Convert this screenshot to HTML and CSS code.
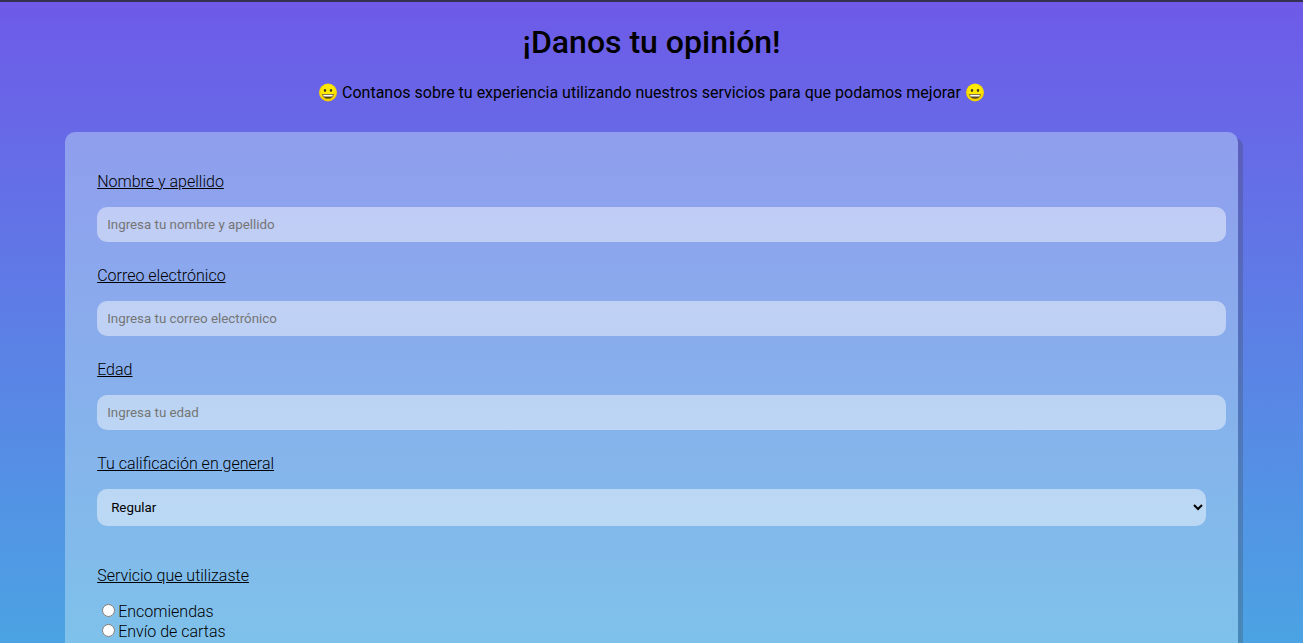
FILE: index.html
```html
<!DOCTYPE html>
<html lang="es">
<head>
<meta charset="utf-8">
<title>Formulario de opinión</title>
<link rel="stylesheet" href="styles.css">
</head>
<body>
<svg width="0" height="0" class="symbols"><defs>
<radialGradient id="skin" cx=".5" cy=".4" r=".6"><stop offset=".5" stop-color="#ffea00"/><stop offset="1" stop-color="#efc700"/></radialGradient>
<symbol id="grin" viewBox="0 0 20 20"><circle cx="10" cy="9.500" r="9" fill="url(#skin)"/><ellipse cx="7" cy="7.500" rx="1.200" ry="1.400" fill="#40391f"/><ellipse cx="13" cy="7.500" rx="1.200" ry="1.400" fill="#40391f"/><path d="M4.200 11H15.800Q15.300 15.700 10 15.700Q4.700 15.700 4.200 11Z" fill="#5b4918"/><path d="M5 11.800H15L14.400 13.500H5.600Z" fill="#fff"/></symbol>
</defs></svg>
<header class="intro">
<h1 class="title">¡Danos tu opinión!</h1>
<p class="subtitle"><svg class="face"><use href="#grin"/></svg> Contanos sobre tu experiencia utilizando nuestros servicios para que podamos mejorar <svg class="face"><use href="#grin"/></svg></p>
</header>
<form class="survey">
<div class="field"><label class="label" for="name">Nombre y apellido</label><input class="input" id="name" type="text" placeholder="Ingresa tu nombre y apellido"></div>
<div class="field"><label class="label" for="email">Correo electrónico</label><input class="input" id="email" type="email" placeholder="Ingresa tu correo electrónico"></div>
<div class="field"><label class="label" for="age">Edad</label><input class="input" id="age" type="number" placeholder="Ingresa tu edad"></div>
<div class="field rating"><label class="label" for="rating">Tu calificación en general</label><select class="select" id="rating"><option>Regular</option></select></div>
<div class="services"><p class="label">Servicio que utilizaste</p>
<div class="options"><label class="option"><input class="radio" type="radio" name="service">Encomiendas</label>
<label class="option"><input class="radio" type="radio" name="service">Envío de cartas</label></div></div>
</form>
</body>
</html>
```

FILE: styles.css
```css
* { box-sizing: border-box; }
html { height: 100%; overflow: hidden; }
body {
  display: flex;
  flex-direction: column;
  height: 100vh;
  margin: 0;
  overflow: hidden;
  border-top: 2px solid #343052;
  background: linear-gradient(#6e5ae8, #4ba3e3);
  color: #000;
  font: 300 16px/19px Roboto, sans-serif;
}
.symbols { flex: none; width: 0; height: 0; }
.intro { flex: none; height: 130px; padding-top: 21px; text-align: center; }
.title { margin: 0; font-size: 32px; font-weight: 500; line-height: 38px; }
.subtitle { margin: 22px 0 0; font-weight: 400; }
.face { width: 20px; height: 20px; vertical-align: -5px; }
.survey {
  flex: 1;
  min-height: 0;
  width: 90%;
  margin: 0 auto;
  padding: 40px 12px 0 32px;
  border-radius: 10px 10px 0 0;
  background: rgba(208, 242, 247, .39);
  box-shadow: 5px 5px 0 rgba(59, 59, 59, .25);
}
.field { height: 94px; }
.rating { height: 112px; }
.label { display: block; margin: 0 0 16px; text-decoration: underline; }
.input, .select {
  display: block;
  width: 100%;
  height: 35px;
  padding: 10px;
  border: 0;
  border-radius: 10px;
  background: rgba(255, 255, 255, .45);
  font: 400 13.333px Roboto, sans-serif;
}
.select { width: 1109px; height: 37px; }
.options { display: grid; }
.option { display: flex; height: 20px; align-items: center; }
.radio { width: 13px; height: 13px; margin: 0 3px 2px 5px; }
```
